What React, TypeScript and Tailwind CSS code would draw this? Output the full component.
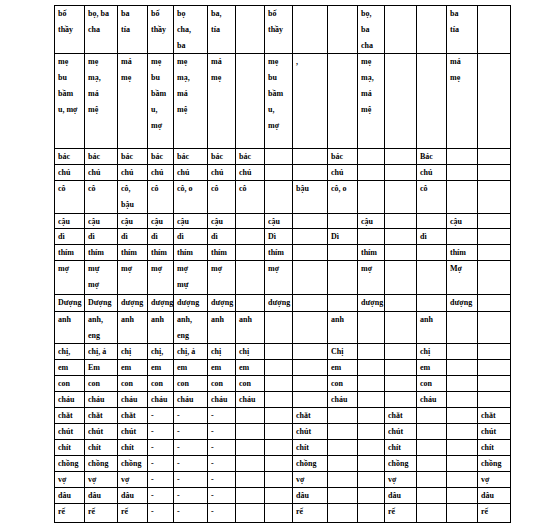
import React from "react";

const E = "";
const rep = (s: string, n: number) => Array(n).fill(s);

const rows: string[][] = [
  ["bố\nthầy", "bọ, ba\ncha", "ba\ntía", "bố\nthầy", "bọ\ncha,\nba", "ba,\ntía", E, "bố\nthầy", E, E, "bọ,\nba\ncha", E, E, "ba\ntía", E],
  ["mẹ\nbu\nbầm\nu, mợ", "mẹ\nmạ,\nmá\nmệ", "má\nmẹ", "mẹ\nbu\nbầm\nu,\nmợ", "mẹ\nmạ,\nmá\nmệ", "má\nmẹ", E, "mẹ\nbu\nbầm\nu,\nmợ", ",", E, "mẹ\nmạ,\nmá\nmệ", E, E, "má\nmẹ", E],
  [...rep("bác", 7), E, E, "bác", E, E, "Bác", E, E],
  [...rep("chú", 7), E, E, "chú", E, E, "chú", E, E],
  ["cô", "cô", "cô,\nbậu", "cô", "cô, o", "cô", "cô", E, "bậu", "cô, o", E, E, "cô", E, E],
  [...rep("cậu", 6), E, "cậu", E, E, "cậu", E, E, "cậu", E],
  [...rep("dì", 6), E, "Dì", E, "Dì", E, E, "dì", E, E],
  [...rep("thím", 6), E, "thím", E, E, "thím", E, E, "thím", E],
  ["mợ", "mự\nmợ", "mợ", "mợ", "mợ\nmự", "mợ", E, "mợ", E, E, "mợ", E, E, "Mợ", E],
  ["Dượng", "Dượng", "dượng", "dượng", "dượng", "dượng", E, "dượng", E, E, "dượng", E, E, "dượng", E],
  ["anh", "anh,\neng", "anh", "anh", "anh,\neng", "anh", "anh", E, E, "anh", E, E, "anh", E, E],
  ["chị,", "chị, ả", "chị", "chị,", "chị, ả", "chị", "chị", E, E, "Chị", E, E, "chị", E, E],
  ["em", "Em", "em", "em", "em", "em", "em", E, E, "em", E, E, "em", E, E],
  [...rep("con", 7), E, E, "con", E, E, "con", E, E],
  [...rep("cháu", 7), E, E, "cháu", E, E, "cháu", E, E],
  ...["chắt", "chút", "chít", "chồng", "vợ", "dâu", "rể"].map((w) => [w, w, w, "-", "-", "-", E, E, w, E, E, w, E, E, w]),
];

export default function App() {
  return (
    <div className="flex items-start w-[539px] h-[526px] bg-white overflow-hidden pt-[5px] pl-[54px]">
      <div
        className="grid bg-black p-px gap-px grid-cols-[29px_32px_29px_25px_33px_27px_28px_27px_34px_29px_26px_31px_29px_30px_32px] grid-rows-[47px_94px_15px_15px_32px_14px_15px_15px_33px_16px_31px_15px_15px_15px_15px_15px_15px_15px_15px_15px_15px_18px] text-[8px] font-bold leading-[16px] text-black"
        style={{ fontFamily: '"Liberation Serif", "Times New Roman", serif' }}
      >
        {rows.flatMap((r, i) =>
          r.map((c, j) => (
            <div key={`${i}-${j}`} className="bg-white pl-[3px] whitespace-pre overflow-visible min-h-0">
              {c}
            </div>
          ))
        )}
      </div>
    </div>
  );
}
